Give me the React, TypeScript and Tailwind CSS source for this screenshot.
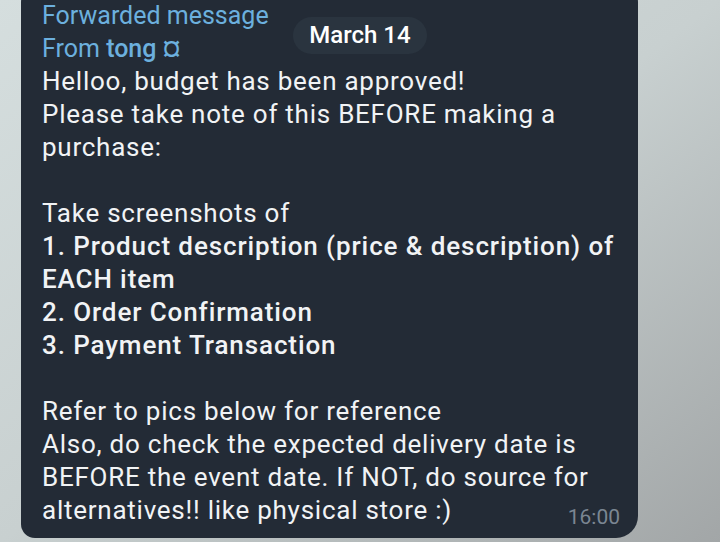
import React from "react";

const header = "text-[#6cb0de]";

const lines: { text: string; bold?: boolean }[] = [
  { text: "Helloo, budget has been approved!" },
  { text: "Please take note of this BEFORE making a" },
  { text: "purchase:" },
  { text: "" },
  { text: "Take screenshots of" },
  { text: "1. Product description (price & description) of", bold: true },
  { text: "EACH item", bold: true },
  { text: "2. Order Confirmation", bold: true },
  { text: "3. Payment Transaction", bold: true },
  { text: "" },
  { text: "Refer to pics below for reference" },
  { text: "Also, do check the expected delivery date is" },
  { text: "BEFORE the event date. If NOT, do source for" },
  { text: "alternatives!! like physical store :)" },
];

const App = () => {
  return (
    <div className="h-[542px] w-[720px] overflow-hidden bg-gradient-to-br from-[#d5dede] via-[#c8d0d0] to-[#a2a6a7] font-['Roboto',sans-serif]">
      {/** Bubble --Start-- */}
      <div className="relative -mt-[12px] ml-[21px] w-[617px] rounded-[14px] rounded-br-[22px] bg-[#232b36] pb-[11px] pl-[21px] pr-4 pt-[11px] text-[26px] leading-[33px] text-[#f1f3f5]">
        <div className={`whitespace-nowrap text-[25px] ${header}`}>Forwarded message</div>
        <div className={`whitespace-nowrap text-[25px] ${header}`}>
          From <span className="font-medium">tong ¤</span>
        </div>

        {lines.map((line, i) => (
          <div
            key={i}
            className={`h-[33px] whitespace-nowrap ${
              line.bold ? "font-medium tracking-[0.9px]" : "tracking-[0.75px]"
            }`}
          >
            {line.text}
          </div>
        ))}

        <div className="absolute left-[272px] top-[29px] flex h-[37px] w-[134px] items-center justify-center rounded-full bg-[#2a343f] text-[24px] font-medium text-white">
          March 14
        </div>

        <div className="absolute bottom-[9px] right-[18px] text-[21px] leading-[24px] text-[#7b8692]">
          16:00
        </div>
      </div>
      {/** Bubble --End-- */}
    </div>
  );
};

export default App;
